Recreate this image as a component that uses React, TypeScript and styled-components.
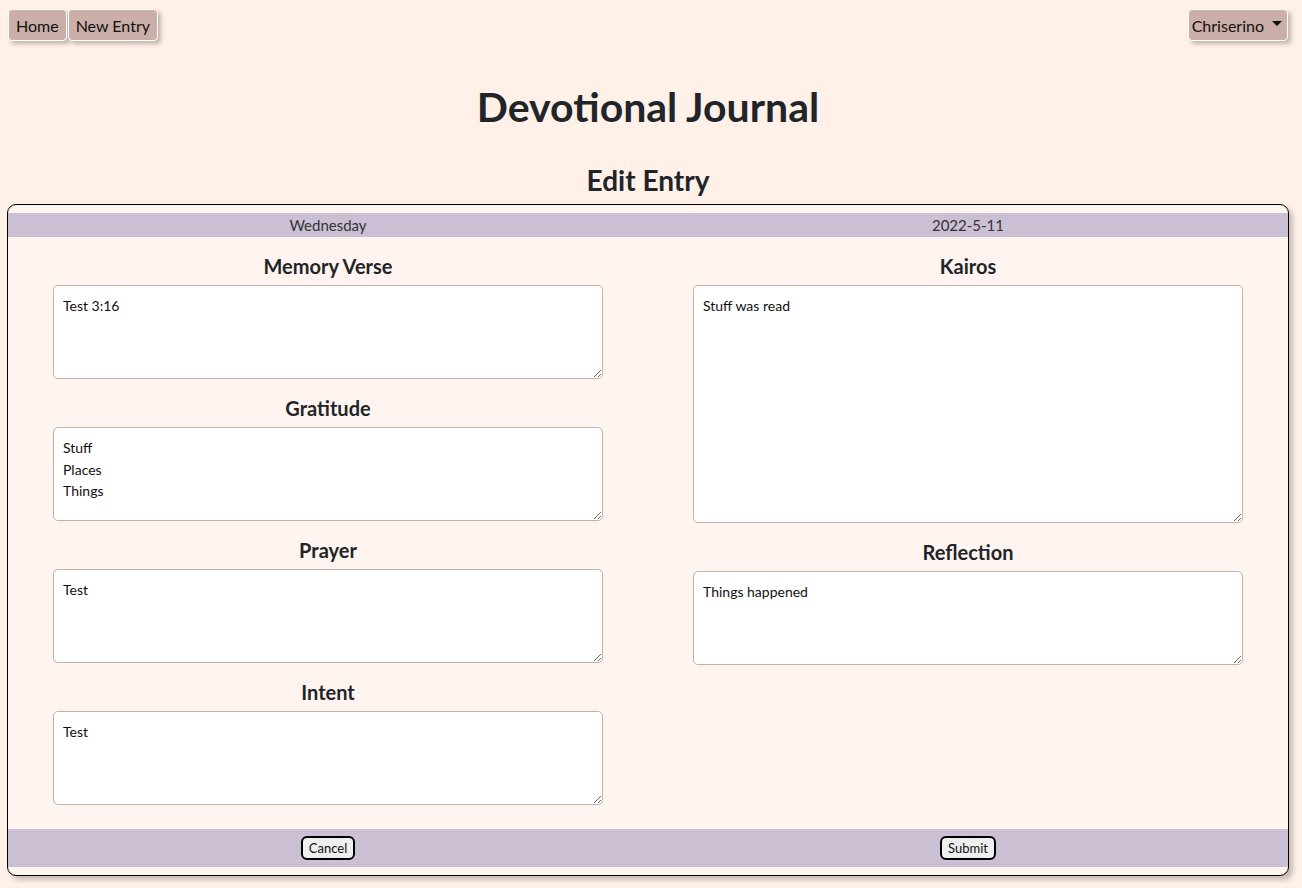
import React from 'react'
import styled, { createGlobalStyle } from 'styled-components'

const GlobalStyle = createGlobalStyle`
  html, body {
    margin: 0;
    padding: 0;
    background: #fff1e8;
    font-family: Lato, "Noto Sans", sans-serif;
    color: #212529;
  }
  * { box-sizing: border-box; }
`

const Page = styled.div`
  min-height: 888px;
  display: flex;
  flex-direction: column;
`

const NavBar = styled.nav`
  display: flex;
  justify-content: space-between;
  align-items: center;
  padding: 9px 14px 0 8px;
`

const NavGroup = styled.div`
  display: flex;
  gap: 1px;
`

const NavButton = styled.button`
  display: flex;
  align-items: center;
  gap: 8px;
  height: 32px;
  padding: 0 7px;
  background: #cbaea7;
  border: 1px solid #ffffff;
  border-radius: 4px;
  box-shadow: 3px 3px 4px rgba(0, 0, 0, 0.25);
  font-family: inherit;
  font-size: 16px;
  color: #111;
  cursor: pointer;
`

const UserButton = styled(NavButton)`
  padding: 0 5px 0 3px;
`

const Caret = styled.span`
  width: 0;
  height: 0;
  border-left: 5px solid transparent;
  border-right: 5px solid transparent;
  border-top: 5px solid #111;
  margin-top: -3px;
`

const Main = styled.main`
  margin: 0 13px 0 7px;
  display: flex;
  flex-direction: column;
`

const Title = styled.h1`
  margin: 42px 0 0;
  text-align: center;
  font-size: 41px;
  font-weight: 700;
  line-height: 48px;
`

const SubTitle = styled.h2`
  margin: 32px 0 0;
  text-align: center;
  font-size: 28px;
  font-weight: 700;
  line-height: 34px;
`

const Card = styled.div`
  margin-top: 7px;
  padding: 8px 0;
  background: #fff4ef;
  border: 1px solid #000;
  border-radius: 9px;
  box-shadow: 4px 4px 5px rgba(0, 0, 0, 0.22);
`

const Bar = styled.div<{ $tall?: boolean }>`
  display: grid;
  grid-template-columns: 1fr 1fr;
  align-items: center;
  height: ${p => (p.$tall ? 38 : 24)}px;
  background: #cbbfd3;
  font-size: 15px;
  color: #333;
  text-align: center;
`

const BarCell = styled.div`
  display: flex;
  justify-content: center;
`

const Body = styled.div`
  display: grid;
  grid-template-columns: 1fr 1fr;
  padding: 0 0 24px;
`

const Column = styled.div`
  display: flex;
  flex-direction: column;
  align-items: center;
`

const Field = styled.div`
  display: flex;
  flex-direction: column;
  align-items: center;
  width: 550px;
`

const Label = styled.h4`
  margin: 16px 0 6px;
  font-size: 20px;
  font-weight: 700;
  line-height: 26px;
`

const Area = styled.textarea<{ $h: number }>`
  width: 550px;
  height: ${p => p.$h}px;
  padding: 9px 9px 10px;
  background: #fff;
  border: 1px solid #bcb5a6;
  border-radius: 5px;
  font-family: inherit;
  font-size: 14px;
  line-height: 21.5px;
  color: #111;
  resize: vertical;
`

const SmallButton = styled.button`
  height: 24px;
  padding: 0 6px;
  background: #efefef;
  border: 2px solid #000;
  border-radius: 6px;
  font-family: inherit;
  font-size: 13px;
  color: #111;
`

const left = [
  { label: 'Memory Verse', value: 'Test 3:16', h: 94 },
  { label: 'Gratitude', value: 'Stuff\nPlaces\nThings', h: 94 },
  { label: 'Prayer', value: 'Test', h: 94 },
  { label: 'Intent', value: 'Test', h: 94 },
]

const right = [
  { label: 'Kairos', value: 'Stuff was read', h: 238 },
  { label: 'Reflection', value: 'Things happened', h: 94 },
]

type Entry = { label: string; value: string; h: number }

const renderField = (f: Entry) => (
  <Field key={f.label}>
    <Label>{f.label}</Label>
    <Area $h={f.h} defaultValue={f.value} />
  </Field>
)

export default function App() {
  return (
    <Page>
      <GlobalStyle />
      <NavBar>
        <NavGroup>
          <NavButton>Home</NavButton>
          <NavButton>New Entry</NavButton>
        </NavGroup>
        <UserButton>
          Chriserino <Caret />
        </UserButton>
      </NavBar>
      <Main>
        <Title>Devotional Journal</Title>
        <SubTitle>Edit Entry</SubTitle>
        <Card>
          <Bar>
            <BarCell>Wednesday</BarCell>
            <BarCell>2022-5-11</BarCell>
          </Bar>
          <Body>
            <Column>{left.map(renderField)}</Column>
            <Column>{right.map(renderField)}</Column>
          </Body>
          <Bar $tall>
            <BarCell>
              <SmallButton>Cancel</SmallButton>
            </BarCell>
            <BarCell>
              <SmallButton>Submit</SmallButton>
            </BarCell>
          </Bar>
        </Card>
      </Main>
    </Page>
  )
}
